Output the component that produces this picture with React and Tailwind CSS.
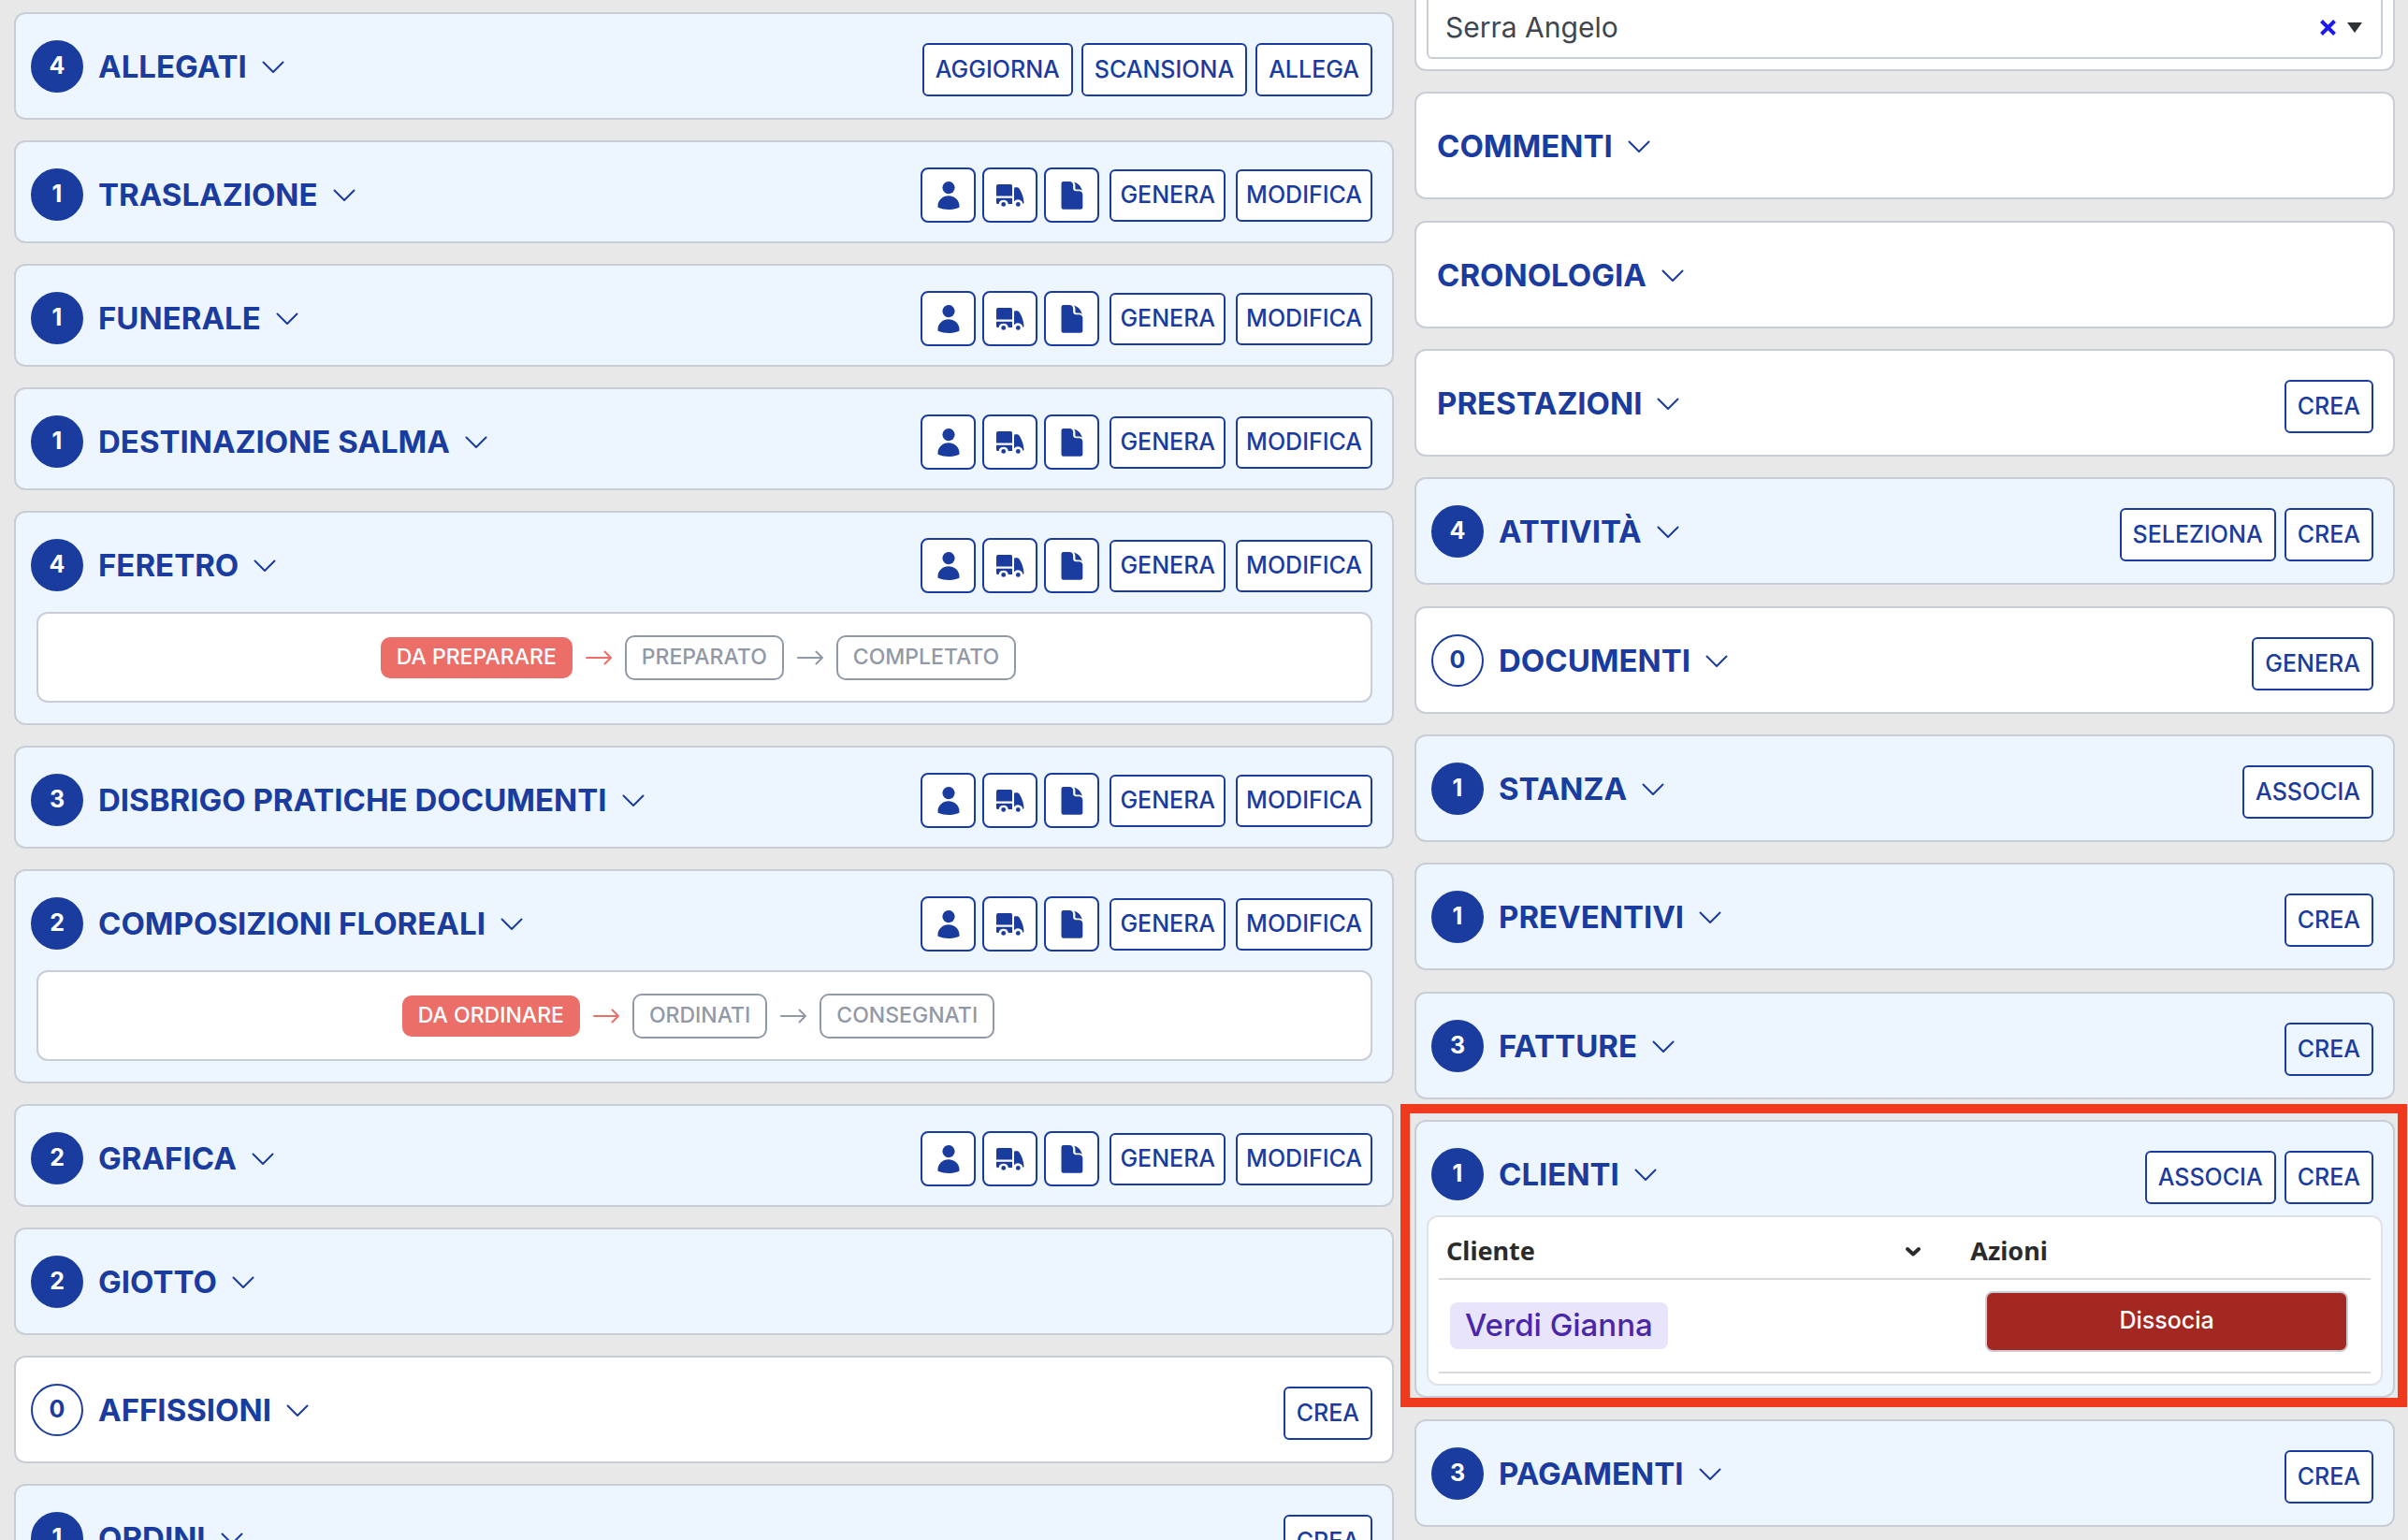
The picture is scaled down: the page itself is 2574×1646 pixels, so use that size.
import React from "react";

function Chevron() {
  return (
    <svg className="w-6 h-[14px] shrink-0" viewBox="0 0 24 14" fill="none" stroke="currentColor" strokeWidth="2" strokeLinecap="round" strokeLinejoin="round">
      <path d="M1.500 1.500 12 12 22.500 1.500" />
    </svg>
  );
}

function PersonIcon() {
  return (
    <svg className="w-6 h-[30px]" viewBox="0 0 24 30" fill="currentColor">
      <circle cx="12" cy="6.600" r="6.600" />
      <path d="M12 15.300c6.400 0 11.500 4.800 11.500 10.600v1c0 .5-.3 1-.8 1.200C19.600 29.400 15.900 30 12 30s-7.600-.600-10.700-1.900c-.5-.2-.8-.7-.8-1.200v-1C.5 20.100 5.600 15.300 12 15.300Z" />
    </svg>
  );
}

function TruckIcon() {
  return (
    <svg className="w-[30px] h-6" viewBox="0 0 30 24" fill="currentColor">
      <path d="M2 0h13.500a1.500 1.500 0 0 1 1.500 1.500V12.500H0V2a2 2 0 0 1 2-2Z" />
      <path d="M0 14.800h17V21h-4.200a5.200 5.200 0 0 0-10.200 0H1.500A1.500 1.500 0 0 1 0 19.500Z" />
      <path d="M19 4.500a1.200 1.200 0 0 1 1.200-1.200H22c1.200 0 2.200.6 2.800 1.600 2.700 4.300 4.300 9.200 4.700 14.300a1.600 1.600 0 0 1-1.200 1.700 5.200 5.200 0 0 0-9.300-2.600Z" />
      <circle cx="7.700" cy="21.400" r="2.400" />
      <circle cx="23.300" cy="21.400" r="2.400" />
    </svg>
  );
}

function DocumentIcon() {
  return (
    <svg className="w-6 h-[30px]" viewBox="0 0 24 30" fill="currentColor">
      <path d="M2.800 0h6.500c2.100 0 3.800 1.700 3.800 3.800v3.500c0 1.600 1.300 2.900 2.900 2.900h3.500c2.100 0 3.800 1.700 3.800 3.800v13.500c0 1.300-1 2.300-2.300 2.300H2.800A2.300 2.300 0 0 1 .5 27.500V2.300A2.300 2.300 0 0 1 2.800 0Z" />
      <path d="M13.600.4a13.400 13.400 0 0 1 9.300 9.300 5.900 5.900 0 0 0-3.500-1.200h-3a1 1 0 0 1-1-1V4.100c0-1.400-.5-2.700-1.800-3.700Z" />
    </svg>
  );
}

function Arrow({ active }) {
  return (
    <svg className={"w-7 h-4 shrink-0 " + (active ? "text-[#eb6e68]" : "text-[#9299a6]")} viewBox="0 0 28 16" fill="none" stroke="currentColor" strokeWidth="2" strokeLinecap="round" strokeLinejoin="round">
      <path d="M1 8h26M20.500 1.500 27 8l-6.500 6.500" />
    </svg>
  );
}

function Badge({ count }) {
  return (
    <span
      className={
        "flex size-14 shrink-0 items-center justify-center rounded-full border-2 border-[#1a3c9e] text-[25px] font-bold " +
        (count === 0 ? "bg-white text-[#1a3c9e]" : "bg-[#1a3c9e] text-white")
      }
    >
      {count}
    </span>
  );
}

function ActionButton({ children, compact, ghost }) {
  return (
    <button
      type="button"
      className={
        "rounded-md border-2 border-[#1a3c9e] text-[25px] font-medium " +
        (compact ? "h-14 px-[9px] " : "h-[57px] px-3 ") +
        (ghost ? "bg-transparent" : "bg-white")
      }
    >
      {children}
    </button>
  );
}

function IconButton({ label, children }) {
  return (
    <button type="button" aria-label={label} className="flex size-[59px] items-center justify-center rounded-lg border-2 border-[#1a3c9e] bg-white">
      {children}
    </button>
  );
}

function ServiceActions() {
  return (
    <div className="flex items-center gap-[11px] pt-[26px]">
      <div className="flex gap-[7px]">
        <IconButton label="Personale"><PersonIcon /></IconButton>
        <IconButton label="Mezzi"><TruckIcon /></IconButton>
        <IconButton label="Documento"><DocumentIcon /></IconButton>
      </div>
      <ActionButton compact>GENERA</ActionButton>
      <ActionButton compact>MODIFICA</ActionButton>
    </div>
  );
}

function Steps({ steps }) {
  return (
    <ol className="mb-[22px] ml-[22px] mr-[21px] flex h-[97px] items-center justify-center gap-[14px] rounded-xl border-2 border-[#c9cdd6] bg-white pr-[13px] text-[23px] font-medium">
      {steps.map((step, i) => (
        <li key={step} className="flex items-center gap-[14px]">
          {i > 0 && <Arrow active={i === 1} />}
          <span
            className={
              i === 0
                ? "flex h-11 items-center rounded-[10px] bg-[#eb6e68] px-[17px] text-white"
                : "flex h-12 items-center rounded-[10px] border-2 border-[#9299a6] px-4 text-[#9299a6]"
            }
          >
            {step}
          </span>
        </li>
      ))}
    </ol>
  );
}

function Section({ title, count, actions = [], service, ghost, className = "", headerHeight, children }) {
  const height = headerHeight || (service ? "min-h-[106px]" : "min-h-[111px]");
  return (
    <section
      className={
        "relative rounded-xl border-2 border-[#c9cdd6] text-[#1a3c9e] " +
        (count ? "bg-[#edf5ff] " : "bg-white ") +
        className
      }
    >
      <header className={"flex items-start justify-between pr-[21px] pt-px " + height + (count === undefined ? " pl-[22px]" : " pl-4")}>
        <div className="mt-[27px] flex h-14 items-center gap-4">
          {count !== undefined && <Badge count={count} />}
          <h2 className="flex items-center gap-4 pt-px text-[33px] font-bold">
            {title}
            <Chevron />
          </h2>
        </div>
        {service && <ServiceActions />}
        {actions.length > 0 && (
          <div className="flex gap-[9px] pt-[30px]">
            {actions.map((a) => (
              <ActionButton key={a} ghost={ghost}>{a}</ActionButton>
            ))}
          </div>
        )}
      </header>
      {children}
    </section>
  );
}

function ClientsTable() {
  return (
    <div className="mx-[11px] mb-[11px] rounded-xl border-2 border-[#e0e2ea] bg-white px-[11px] pb-[11px]">
      <table className="w-full table-fixed border-collapse">
        <thead className="font-['Noto_Sans',sans-serif] text-[27px] text-[#2b2b2b]">
          <tr className="h-[66px] border-b-2 border-[#d9d9d9] text-left">
            <th scope="col" className="w-9/16 px-2 pt-2 font-bold">
              <span className="flex items-center justify-between pr-9">
                Cliente
                <svg className="w-[18px] h-3" viewBox="0 0 18 12" fill="none" stroke="currentColor" strokeWidth="4" strokeLinecap="round" strokeLinejoin="round">
                  <path d="M3 3l6 5.500L15 3" />
                </svg>
              </span>
            </th>
            <th scope="col" className="px-2 pt-2 font-bold">Azioni</th>
          </tr>
        </thead>
        <tbody>
          <tr className="h-[100px] border-b-2 border-[#d9d9d9]">
            <td className="px-3">
              <a href="#cliente" className="inline-flex h-[50px] items-center rounded-lg bg-[#e8e4fb] px-4 text-[33px] font-medium text-[#4a27a6]">
                Verdi Gianna
              </a>
            </td>
            <td className="px-6 pb-[10px]">
              <button type="button" className="h-[65px] w-full rounded-lg border-2 border-[#c9cdd6] bg-[#a42822] text-[25px] font-medium text-white">
                Dissocia
              </button>
            </td>
          </tr>
        </tbody>
      </table>
    </div>
  );
}

function PersonSelect() {
  return (
    <div className="rounded-b-xl border-2 border-t-0 border-[#c9cdd6] bg-white px-[11px] pb-[11px]">
      <div className="flex h-[63px] items-center rounded-b-md border-2 border-t-0 border-[#c9cdd6] pb-[3px] pl-[18px] pr-5 text-[#40464d]">
        <select aria-label="Persona" className="min-w-0 flex-1 appearance-none bg-transparent text-[30px]">
          <option>Serra Angelo</option>
        </select>
        <button type="button" aria-label="Rimuovi" className="mr-3 text-[#1a1aee]">
          <svg className="size-[17px]" viewBox="0 0 17 17" fill="none" stroke="currentColor" strokeWidth="4">
            <path d="M1.500 1.500l14 14M15.500 1.500l-14 14" />
          </svg>
        </button>
        <svg className="w-4 h-[11px]" viewBox="0 0 16 11" fill="#2c3136">
          <path d="M0 0h16L8 11Z" />
        </svg>
      </div>
    </div>
  );
}

export default function App() {
  return (
    <main className="grid h-screen grid-cols-[1475fr_1048fr] items-start gap-[22px] overflow-hidden bg-[#e8e8e8] pl-[15px] pr-[14px] font-['Inter',sans-serif]">
      <div className="flex min-w-0 flex-col gap-[22px] pt-[13px]">
        <Section title="ALLEGATI" count={4} actions={["AGGIORNA", "SCANSIONA", "ALLEGA"]} />
        <Section title="TRASLAZIONE" count={1} service />
        <Section title="FUNERALE" count={1} service />
        <Section title="DESTINAZIONE SALMA" count={1} service />
        <Section title="FERETRO" count={4} service>
          <Steps steps={["DA PREPARARE", "PREPARATO", "COMPLETATO"]} />
        </Section>
        <Section title="DISBRIGO PRATICHE DOCUMENTI" count={3} service />
        <Section title="COMPOSIZIONI FLOREALI" count={2} service>
          <Steps steps={["DA ORDINARE", "ORDINATI", "CONSEGNATI"]} />
        </Section>
        <Section title="GRAFICA" count={2} service />
        <Section title="GIOTTO" count={2} />
        <Section title="AFFISSIONI" count={0} actions={["CREA"]} />
        <Section title="ORDINI" count={1} actions={["CREA"]} />
      </div>

      <div className="flex min-w-0 flex-col">
        <PersonSelect />
        <Section className="mt-[22px]" title="COMMENTI" />
        <Section className="mt-[23px]" title="CRONOLOGIA" />
        <Section className="mt-[22px]" title="PRESTAZIONI" actions={["CREA"]} />
        <Section className="mt-[22px]" title="ATTIVITÀ" count={4} actions={["SELEZIONA", "CREA"]} />
        <Section className="mt-[23px]" title="DOCUMENTI" count={0} actions={["GENERA"]} />
        <Section className="mt-[22px]" title="STANZA" count={1} actions={["ASSOCIA"]} />
        <Section className="mt-[22px]" title="PREVENTIVI" count={1} actions={["CREA"]} />
        <Section className="mt-[23px]" title="FATTURE" count={3} actions={["CREA"]} ghost />
        <Section className="mt-[22px]" title="CLIENTI" count={1} actions={["ASSOCIA", "CREA"]} headerHeight="min-h-[100px]">
          <ClientsTable />
          <div className="pointer-events-none absolute -left-[17px] -right-[15px] -top-[19px] -bottom-3 border-[10px] border-[#ef3a1e]" />
        </Section>
        <Section className="mt-[23px]" title="PAGAMENTI" count={3} actions={["CREA"]} />
      </div>
    </main>
  );
}
